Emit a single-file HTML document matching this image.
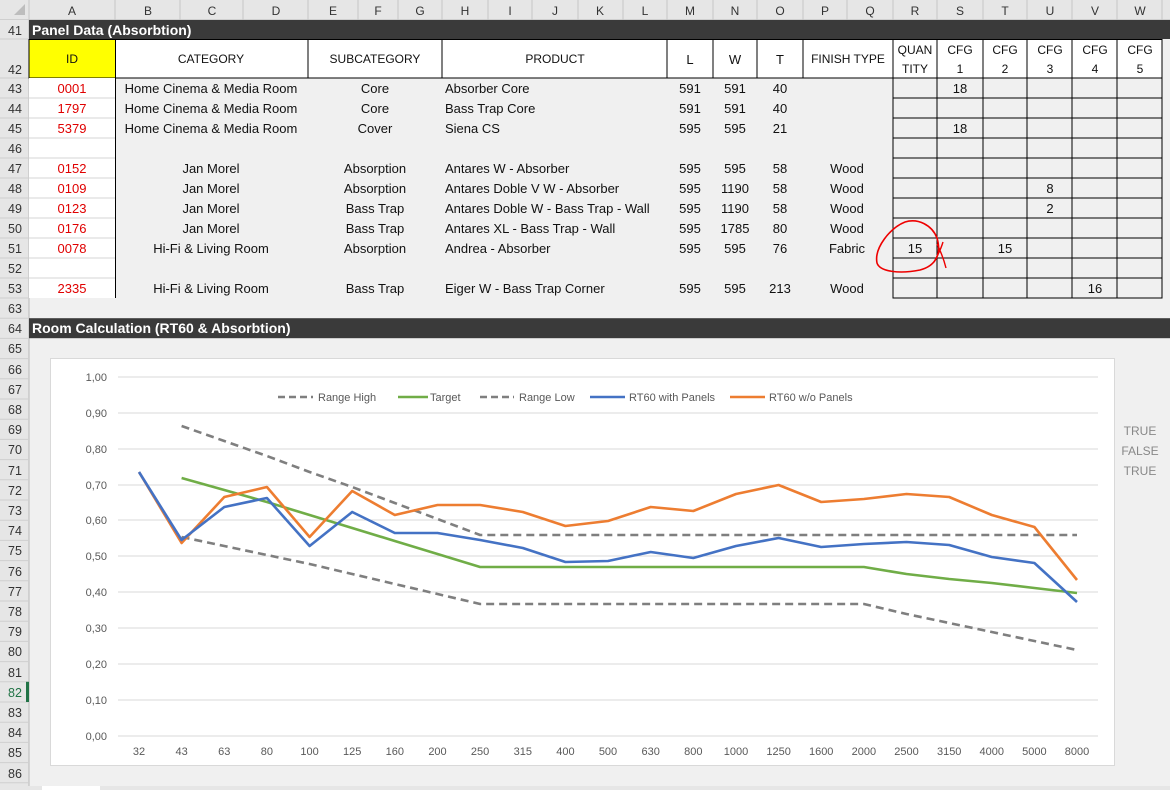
<!DOCTYPE html>
<html><head><meta charset="utf-8"><style>
html,body{margin:0;padding:0;background:#f0f0f0;}
svg{display:block;font-family:"Liberation Sans",sans-serif;}
</style></head><body>
<svg width="1170" height="790" viewBox="0 0 1170 790" xmlns="http://www.w3.org/2000/svg">
<rect width="1170" height="790" fill="#f0f0f0"/>
<!-- column header -->
<rect x="0" y="0" width="1170" height="20" fill="#e6e6e6"/>
<line x1="0" y1="20" x2="1170" y2="20" stroke="#b8b8b8"/>
<polygon points="14,15 25,15 25,4" fill="#bdbdbd"/>
<g stroke="#c6c6c6">
<line x1="29" y1="0" x2="29" y2="20"/><line x1="115" y1="0" x2="115" y2="20"/><line x1="180" y1="0" x2="180" y2="20"/><line x1="243" y1="0" x2="243" y2="20"/><line x1="308" y1="0" x2="308" y2="20"/><line x1="358" y1="0" x2="358" y2="20"/><line x1="398" y1="0" x2="398" y2="20"/><line x1="442" y1="0" x2="442" y2="20"/><line x1="488" y1="0" x2="488" y2="20"/><line x1="532" y1="0" x2="532" y2="20"/><line x1="578" y1="0" x2="578" y2="20"/><line x1="623" y1="0" x2="623" y2="20"/><line x1="667" y1="0" x2="667" y2="20"/><line x1="713" y1="0" x2="713" y2="20"/><line x1="757" y1="0" x2="757" y2="20"/><line x1="803" y1="0" x2="803" y2="20"/><line x1="847" y1="0" x2="847" y2="20"/><line x1="893" y1="0" x2="893" y2="20"/><line x1="937" y1="0" x2="937" y2="20"/><line x1="983" y1="0" x2="983" y2="20"/><line x1="1027" y1="0" x2="1027" y2="20"/><line x1="1072" y1="0" x2="1072" y2="20"/><line x1="1117" y1="0" x2="1117" y2="20"/><line x1="1162" y1="0" x2="1162" y2="20"/>
</g>
<g font-size="12" fill="#333" text-anchor="middle">
<text x="72" y="15">A</text><text x="148" y="15">B</text><text x="212" y="15">C</text><text x="276" y="15">D</text><text x="333" y="15">E</text><text x="378" y="15">F</text><text x="420" y="15">G</text><text x="465" y="15">H</text><text x="510" y="15">I</text><text x="555" y="15">J</text><text x="600" y="15">K</text><text x="645" y="15">L</text><text x="690" y="15">M</text><text x="735" y="15">N</text><text x="780" y="15">O</text><text x="825" y="15">P</text><text x="870" y="15">Q</text><text x="915" y="15">R</text><text x="960" y="15">S</text><text x="1005" y="15">T</text><text x="1050" y="15">U</text><text x="1095" y="15">V</text><text x="1140" y="15">W</text>
</g>
<!-- row header column -->
<rect x="0" y="20" width="29" height="770" fill="#e6e6e6"/>
<line x1="29" y1="20" x2="29" y2="790" stroke="#b8b8b8"/>
<g stroke="#cfcfcf">
<line x1="0" y1="39" x2="29" y2="39"/><line x1="0" y1="78" x2="29" y2="78"/><line x1="0" y1="98" x2="29" y2="98"/><line x1="0" y1="118" x2="29" y2="118"/><line x1="0" y1="138" x2="29" y2="138"/><line x1="0" y1="158" x2="29" y2="158"/><line x1="0" y1="178" x2="29" y2="178"/><line x1="0" y1="198" x2="29" y2="198"/><line x1="0" y1="218" x2="29" y2="218"/><line x1="0" y1="238" x2="29" y2="238"/><line x1="0" y1="258" x2="29" y2="258"/><line x1="0" y1="278" x2="29" y2="278"/><line x1="0" y1="298" x2="29" y2="298"/>
<line x1="0" y1="318.2" x2="29" y2="318.2"/><line x1="0" y1="338.4" x2="29" y2="338.4"/><line x1="0" y1="358.6" x2="29" y2="358.6"/><line x1="0" y1="378.8" x2="29" y2="378.8"/><line x1="0" y1="399" x2="29" y2="399"/><line x1="0" y1="419.2" x2="29" y2="419.2"/><line x1="0" y1="439.4" x2="29" y2="439.4"/><line x1="0" y1="459.6" x2="29" y2="459.6"/><line x1="0" y1="479.8" x2="29" y2="479.8"/><line x1="0" y1="500" x2="29" y2="500"/><line x1="0" y1="520.2" x2="29" y2="520.2"/><line x1="0" y1="540.4" x2="29" y2="540.4"/><line x1="0" y1="560.6" x2="29" y2="560.6"/><line x1="0" y1="580.8" x2="29" y2="580.8"/><line x1="0" y1="601" x2="29" y2="601"/><line x1="0" y1="621.2" x2="29" y2="621.2"/><line x1="0" y1="641.4" x2="29" y2="641.4"/><line x1="0" y1="661.6" x2="29" y2="661.6"/><line x1="0" y1="681.8" x2="29" y2="681.8"/><line x1="0" y1="702" x2="29" y2="702"/><line x1="0" y1="722.2" x2="29" y2="722.2"/><line x1="0" y1="742.4" x2="29" y2="742.4"/><line x1="0" y1="762.6" x2="29" y2="762.6"/><line x1="0" y1="782.8" x2="29" y2="782.8"/>
</g>
<rect x="26" y="681.8" width="3" height="20.2" fill="#217346"/>
<g font-size="12.5" fill="#333" text-anchor="middle">
<text x="15" y="35">41</text><text x="15" y="74">42</text><text x="15" y="93">43</text><text x="15" y="113">44</text><text x="15" y="133">45</text><text x="15" y="153">46</text><text x="15" y="173">47</text><text x="15" y="193">48</text><text x="15" y="213">49</text><text x="15" y="233">50</text><text x="15" y="253">51</text><text x="15" y="273">52</text><text x="15" y="293">53</text>
<text x="15" y="313">63</text><text x="15" y="333">64</text><text x="15" y="353">65</text><text x="15" y="374">66</text><text x="15" y="394">67</text><text x="15" y="414">68</text><text x="15" y="434">69</text><text x="15" y="454">70</text><text x="15" y="475">71</text><text x="15" y="495">72</text><text x="15" y="515">73</text><text x="15" y="535">74</text><text x="15" y="555">75</text><text x="15" y="576">76</text><text x="15" y="596">77</text><text x="15" y="616">78</text><text x="15" y="636">79</text><text x="15" y="656">80</text><text x="15" y="677">81</text><text x="15" y="697" fill="#217346">82</text><text x="15" y="717">83</text><text x="15" y="737">84</text><text x="15" y="757">85</text><text x="15" y="778">86</text>
</g>
<!-- dark bars -->
<rect x="29" y="20" width="1141" height="19" fill="#3a3a3a"/>
<text x="32" y="35" font-size="14" font-weight="bold" fill="#fff">Panel Data (Absorbtion)</text>
<rect x="29" y="318.2" width="1141" height="20" fill="#3a3a3a"/>
<text x="32" y="333" font-size="14" font-weight="bold" fill="#fff">Room Calculation (RT60 &amp; Absorbtion)</text>
<!-- header row 42 -->
<rect x="29" y="39" width="86" height="39" fill="#ffff00"/>
<rect x="115" y="39" width="1047" height="39" fill="#fff"/>
<g stroke="#000" stroke-width="1" fill="none">
<rect x="29" y="39.5" width="1133" height="38.5"/>
<line x1="115.5" y1="39" x2="115.5" y2="298"/><line x1="308" y1="39" x2="308" y2="78"/><line x1="442" y1="39" x2="442" y2="78"/><line x1="667" y1="39" x2="667" y2="78"/><line x1="713" y1="39" x2="713" y2="78"/><line x1="757" y1="39" x2="757" y2="78"/><line x1="803" y1="39" x2="803" y2="78"/><line x1="893" y1="39" x2="893" y2="78"/><line x1="937" y1="39" x2="937" y2="78"/><line x1="983" y1="39" x2="983" y2="78"/><line x1="1027" y1="39" x2="1027" y2="78"/><line x1="1072" y1="39" x2="1072" y2="78"/><line x1="1117" y1="39" x2="1117" y2="78"/>
</g>
<g font-size="12" fill="#111" text-anchor="middle">
<text x="72" y="63">ID</text><text x="211" y="63">CATEGORY</text><text x="375" y="63">SUBCATEGORY</text><text x="555" y="63">PRODUCT</text><text x="690" y="64" font-size="13">L</text><text x="735" y="64" font-size="13">W</text><text x="780" y="64" font-size="13">T</text><text x="848" y="63">FINISH TYPE</text>
<text x="915" y="54">QUAN</text><text x="915" y="73">TITY</text>
<text x="960" y="54">CFG</text><text x="960" y="73">1</text><text x="1005" y="54">CFG</text><text x="1005" y="73">2</text><text x="1050" y="54">CFG</text><text x="1050" y="73">3</text><text x="1095" y="54">CFG</text><text x="1095" y="73">4</text><text x="1140" y="54">CFG</text><text x="1140" y="73">5</text>
</g>
<!-- column A white cells -->
<rect x="29" y="78" width="86" height="220" fill="#fff"/>
<g stroke="#d4d4d4"><line x1="29" y1="98" x2="115" y2="98"/><line x1="29" y1="118" x2="115" y2="118"/><line x1="29" y1="138" x2="115" y2="138"/><line x1="29" y1="158" x2="115" y2="158"/><line x1="29" y1="178" x2="115" y2="178"/><line x1="29" y1="198" x2="115" y2="198"/><line x1="29" y1="218" x2="115" y2="218"/><line x1="29" y1="238" x2="115" y2="238"/><line x1="29" y1="258" x2="115" y2="258"/><line x1="29" y1="278" x2="115" y2="278"/></g>
<!-- R-W grid -->
<g stroke="#000" fill="none">
<rect x="893" y="78" width="269" height="220"/>
<line x1="893" y1="98" x2="1162" y2="98"/><line x1="893" y1="118" x2="1162" y2="118"/><line x1="893" y1="138" x2="1162" y2="138"/><line x1="893" y1="158" x2="1162" y2="158"/><line x1="893" y1="178" x2="1162" y2="178"/><line x1="893" y1="198" x2="1162" y2="198"/><line x1="893" y1="218" x2="1162" y2="218"/><line x1="893" y1="238" x2="1162" y2="238"/><line x1="893" y1="258" x2="1162" y2="258"/><line x1="893" y1="278" x2="1162" y2="278"/>
<line x1="937" y1="78" x2="937" y2="298"/><line x1="983" y1="78" x2="983" y2="298"/><line x1="1027" y1="78" x2="1027" y2="298"/><line x1="1072" y1="78" x2="1072" y2="298"/><line x1="1117" y1="78" x2="1117" y2="298"/>
</g>
<!-- data text -->
<g font-size="13" fill="#e00000" text-anchor="middle">
<text x="72" y="93">0001</text><text x="72" y="113">1797</text><text x="72" y="133">5379</text><text x="72" y="173">0152</text><text x="72" y="193">0109</text><text x="72" y="213">0123</text><text x="72" y="233">0176</text><text x="72" y="253">0078</text><text x="72" y="293">2335</text>
</g>
<g font-size="13" fill="#111" text-anchor="middle">
<text x="211" y="93">Home Cinema &amp; Media Room</text><text x="211" y="113">Home Cinema &amp; Media Room</text><text x="211" y="133">Home Cinema &amp; Media Room</text>
<text x="211" y="173">Jan Morel</text><text x="211" y="193">Jan Morel</text><text x="211" y="213">Jan Morel</text><text x="211" y="233">Jan Morel</text><text x="211" y="253">Hi-Fi &amp; Living Room</text><text x="211" y="293">Hi-Fi &amp; Living Room</text>
<text x="375" y="93">Core</text><text x="375" y="113">Core</text><text x="375" y="133">Cover</text><text x="375" y="173">Absorption</text><text x="375" y="193">Absorption</text><text x="375" y="213">Bass Trap</text><text x="375" y="233">Bass Trap</text><text x="375" y="253">Absorption</text><text x="375" y="293">Bass Trap</text>
<text x="690" y="93">591</text><text x="735" y="93">591</text><text x="780" y="93">40</text>
<text x="690" y="113">591</text><text x="735" y="113">591</text><text x="780" y="113">40</text>
<text x="690" y="133">595</text><text x="735" y="133">595</text><text x="780" y="133">21</text>
<text x="690" y="173">595</text><text x="735" y="173">595</text><text x="780" y="173">58</text><text x="847" y="173">Wood</text>
<text x="690" y="193">595</text><text x="735" y="193">1190</text><text x="780" y="193">58</text><text x="847" y="193">Wood</text>
<text x="690" y="213">595</text><text x="735" y="213">1190</text><text x="780" y="213">58</text><text x="847" y="213">Wood</text>
<text x="690" y="233">595</text><text x="735" y="233">1785</text><text x="780" y="233">80</text><text x="847" y="233">Wood</text>
<text x="690" y="253">595</text><text x="735" y="253">595</text><text x="780" y="253">76</text><text x="847" y="253">Fabric</text>
<text x="690" y="293">595</text><text x="735" y="293">595</text><text x="780" y="293">213</text><text x="847" y="293">Wood</text>
<text x="960" y="93">18</text><text x="960" y="133">18</text><text x="1050" y="193">8</text><text x="1050" y="213">2</text><text x="915" y="253">15</text><text x="1005" y="253">15</text><text x="1095" y="293">16</text>
</g>
<g font-size="13" fill="#111">
<text x="445" y="93">Absorber Core</text><text x="445" y="113">Bass Trap Core</text><text x="445" y="133">Siena CS</text><text x="445" y="173">Antares W - Absorber</text><text x="445" y="193">Antares Doble V W - Absorber</text><text x="445" y="213">Antares Doble W - Bass Trap - Wall</text><text x="445" y="233">Antares XL - Bass Trap - Wall</text><text x="445" y="253">Andrea - Absorber</text><text x="445" y="293">Eiger W - Bass Trap Corner</text>
</g>
<!-- red annotation -->
<path d="M905,222 C890,228 874,248 877,263 C880,272 900,274 920,270 C935,266 942,255 937,238 C932,225 918,218 905,222" fill="none" stroke="#e00" stroke-width="1.6"/>
<path d="M943,242 C940,252 936,258 934,262 M937,244 C941,252 944,260 946,268" fill="none" stroke="#e00" stroke-width="1.4"/>
<!-- TRUE FALSE -->
<g font-size="12" fill="#888" text-anchor="middle"><text x="1140" y="435">TRUE</text><text x="1140" y="455">FALSE</text><text x="1140" y="475">TRUE</text></g>
<!-- chart -->
<rect x="50.5" y="358.5" width="1064" height="407" fill="#fff" stroke="#d9d9d9"/>
<g stroke="#d9d9d9"><line x1="118" y1="377" x2="1098" y2="377"/><line x1="118" y1="413" x2="1098" y2="413"/><line x1="118" y1="449" x2="1098" y2="449"/><line x1="118" y1="485" x2="1098" y2="485"/><line x1="118" y1="520" x2="1098" y2="520"/><line x1="118" y1="556" x2="1098" y2="556"/><line x1="118" y1="592" x2="1098" y2="592"/><line x1="118" y1="628" x2="1098" y2="628"/><line x1="118" y1="664" x2="1098" y2="664"/><line x1="118" y1="700" x2="1098" y2="700"/><line x1="118" y1="736" x2="1098" y2="736"/></g>
<g font-size="11" fill="#595959" text-anchor="end"><text x="107" y="381">1,00</text><text x="107" y="417">0,90</text><text x="107" y="453">0,80</text><text x="107" y="489">0,70</text><text x="107" y="524">0,60</text><text x="107" y="560">0,50</text><text x="107" y="596">0,40</text><text x="107" y="632">0,30</text><text x="107" y="668">0,20</text><text x="107" y="704">0,10</text><text x="107" y="740">0,00</text></g>
<g font-size="11" fill="#595959" text-anchor="middle"><text x="139" y="755">32</text><text x="181.6" y="755">43</text><text x="224.3" y="755">63</text><text x="266.9" y="755">80</text><text x="309.6" y="755">100</text><text x="352.2" y="755">125</text><text x="394.8" y="755">160</text><text x="437.5" y="755">200</text><text x="480.1" y="755">250</text><text x="522.8" y="755">315</text><text x="565.4" y="755">400</text><text x="608" y="755">500</text><text x="650.7" y="755">630</text><text x="693.3" y="755">800</text><text x="736" y="755">1000</text><text x="778.6" y="755">1250</text><text x="821.2" y="755">1600</text><text x="863.9" y="755">2000</text><text x="906.5" y="755">2500</text><text x="949.2" y="755">3150</text><text x="991.8" y="755">4000</text><text x="1034.4" y="755">5000</text><text x="1077" y="755">8000</text></g>
<!-- legend -->
<g stroke-width="2.5" fill="none">
<line x1="278" y1="397" x2="313" y2="397" stroke="#7f7f7f" stroke-dasharray="7,4"/>
<line x1="398" y1="397" x2="428" y2="397" stroke="#70ad47"/>
<line x1="480" y1="397" x2="514" y2="397" stroke="#7f7f7f" stroke-dasharray="7,4"/>
<line x1="590" y1="397" x2="625" y2="397" stroke="#4472c4"/>
<line x1="730" y1="397" x2="765" y2="397" stroke="#ed7d31"/>
</g>
<g font-size="11" fill="#595959"><text x="318" y="401">Range High</text><text x="430" y="401">Target</text><text x="519" y="401">Range Low</text><text x="629" y="401">RT60 with Panels</text><text x="769" y="401">RT60 w/o Panels</text></g>
<!-- series -->
<g fill="none" stroke-width="2.6" stroke-linejoin="round">
<polyline stroke="#7f7f7f" stroke-dasharray="8,5" points="181.6,426 224.3,441 266.9,456 309.6,472 352.2,487 394.8,503 437.5,519 480.1,535 522.8,535 565.4,535 608,535 650.7,535 693.3,535 736,535 778.6,535 821.2,535 863.9,535 906.5,535 949.2,535 991.8,535 1034.4,535 1077,535"/>
<polyline stroke="#7f7f7f" stroke-dasharray="8,5" points="181.6,537 224.3,546 266.9,555 309.6,564 352.2,574 394.8,584 437.5,594 480.1,604 522.8,604 565.4,604 608,604 650.7,604 693.3,604 736,604 778.6,604 821.2,604 863.9,604 906.5,614 949.2,623 991.8,632 1034.4,641 1077,650"/>
<polyline stroke="#70ad47" points="181.6,478 224.3,490 266.9,502 309.6,515 352.2,528 394.8,541 437.5,554 480.1,567 522.8,567 565.4,567 608,567 650.7,567 693.3,567 736,567 778.6,567 821.2,567 863.9,567 906.5,574 949.2,579 991.8,583 1034.4,588 1077,593"/>
<polyline stroke="#ed7d31" points="139,472 181.6,543 224.3,497 266.9,487 309.6,537 352.2,491 394.8,515 437.5,505 480.1,505 522.8,512 565.4,526 608,521 650.7,507 693.3,511 736,494 778.6,485 821.2,502 863.9,499 906.5,494 949.2,497 991.8,515 1034.4,527 1077,580"/>
<polyline stroke="#4472c4" points="139,472 181.6,540 224.3,507 266.9,498 309.6,546 352.2,512 394.8,533 437.5,533 480.1,540 522.8,548 565.4,562 608,561 650.7,552 693.3,558 736,546 778.6,538 821.2,547 863.9,544 906.5,542 949.2,545 991.8,557 1034.4,563 1077,602"/>
</g>
<!-- bottom tab bar -->
<rect x="0" y="786" width="1170" height="4" fill="#e6e6e6"/>
<rect x="42" y="786" width="58" height="4" fill="#fff"/>
</svg>
</body></html>
